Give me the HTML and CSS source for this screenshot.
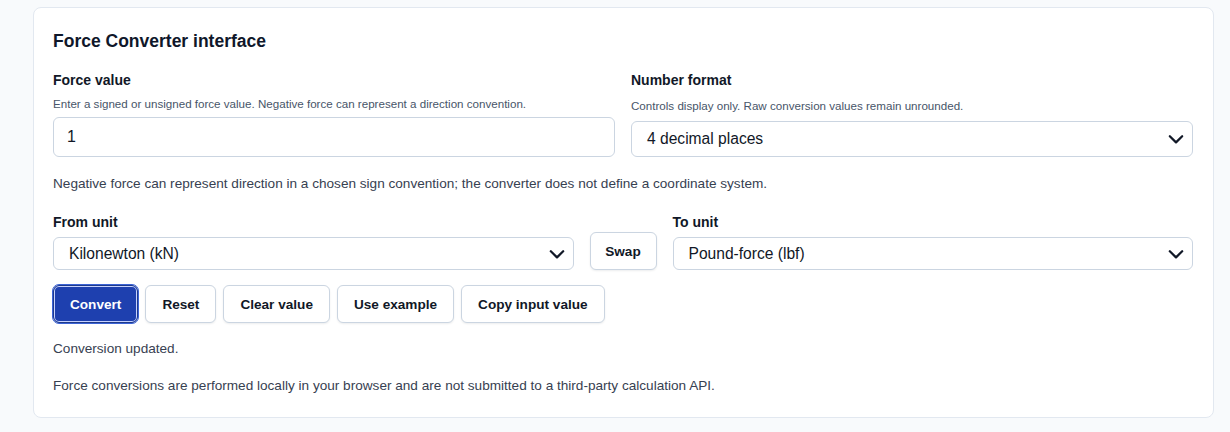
FILE: index.html
```html
<!DOCTYPE html>
<html lang="en">
<head>
<meta charset="utf-8">
<title>Force Converter</title>
<link rel="stylesheet" href="styles.css">
</head>
<body>
<section class="card">
  <h2 class="title">Force Converter interface</h2>
  <div class="top-grid">
    <div class="field">
      <label class="label" for="val">Force value</label>
      <p class="hint">Enter a signed or unsigned force value. Negative force can represent a direction convention.</p>
      <input id="val" class="input" type="text" value="1">
    </div>
    <div class="field">
      <label class="label" for="fmt">Number format</label>
      <p class="hint">Controls display only. Raw conversion values remain unrounded.</p>
      <div class="select select-lg" id="fmt"><span>4 decimal places</span><svg class="chev" viewBox="0 0 16 16"><path d="M2.5 5.5 8 11l5.5-5.5" fill="none" stroke="#111827" stroke-width="2" stroke-linecap="round" stroke-linejoin="round"/></svg></div>
    </div>
  </div>
  <p class="note">Negative force can represent direction in a chosen sign convention; the converter does not define a coordinate system.</p>
  <div class="unit-grid">
    <div class="field">
      <span class="label">From unit</span>
      <div class="select"><span>Kilonewton (kN)</span><svg class="chev" viewBox="0 0 16 16"><path d="M2.5 5.5 8 11l5.5-5.5" fill="none" stroke="#111827" stroke-width="2" stroke-linecap="round" stroke-linejoin="round"/></svg></div>
    </div>
    <button class="btn swap" type="button">Swap</button>
    <div class="field">
      <span class="label">To unit</span>
      <div class="select"><span>Pound-force (lbf)</span><svg class="chev" viewBox="0 0 16 16"><path d="M2.5 5.5 8 11l5.5-5.5" fill="none" stroke="#111827" stroke-width="2" stroke-linecap="round" stroke-linejoin="round"/></svg></div>
    </div>
  </div>
  <div class="actions">
    <button class="btn primary" type="button">Convert</button>
    <button class="btn" type="button">Reset</button>
    <button class="btn" type="button">Clear value</button>
    <button class="btn" type="button">Use example</button>
    <button class="btn" type="button">Copy input value</button>
  </div>
  <p class="status">Conversion updated.</p>
  <p class="privacy">Force conversions are performed locally in your browser and are not submitted to a third-party calculation API.</p>
</section>
</body>
</html>
```

FILE: styles.css
```css
* { box-sizing: border-box; }

html, body {
  margin: 0;
  background: #f8fafc;
}

body {
  padding: 7px 16px 0 33px;
  font-family: "Liberation Sans", Arial, sans-serif;
  color: #111827;
}

.card {
  background: #ffffff;
  border: 1px solid #e2e8f0;
  border-radius: 8px;
  padding: 21px 20px 22px 19px;
  height: 411px;
}

.title {
  margin: 0 0 18px;
  font-size: 17.5px;
  line-height: 24px;
  font-weight: 700;
  color: #0f172a;
}

.top-grid {
  display: grid;
  grid-template-columns: 1fr 1fr;
  gap: 16px;
}

.field {
  display: flex;
  flex-direction: column;
}

.label {
  font-size: 14px;
  font-weight: 700;
  line-height: 18px;
  color: #111827;
}

.hint {
  margin: 7px 0 5px;
  font-size: 11.6px;
  line-height: 16px;
  color: #475569;
}

.top-grid .field:last-child .hint {
  margin: 9px 0 7px;
}

.input {
  height: 40px;
  border: 1px solid #cbd5e1;
  border-radius: 6px;
  padding: 0 13px;
  font-family: inherit;
  font-size: 16px;
  color: #111827;
  background: #ffffff;
}

.select {
  display: flex;
  align-items: center;
  justify-content: space-between;
  height: 33px;
  border: 1px solid #cbd5e1;
  border-radius: 6px;
  padding: 0 7px 0 15px;
  font-size: 15.6px;
  color: #111827;
  background: #ffffff;
}

.select-lg {
  height: 36px;
}

.chev {
  width: 18px;
  height: 18px;
}

.note {
  margin: 18px 0 0;
  font-size: 13.6px;
  line-height: 18px;
  color: #374151;
}

.unit-grid {
  display: grid;
  grid-template-columns: 1fr auto 1fr;
  gap: 16px;
  align-items: end;
  margin-top: 20px;
}

.unit-grid .label {
  margin-bottom: 6px;
}

.btn {
  height: 38px;
  padding: 0 16px;
  border: 1px solid #cbd5e1;
  border-radius: 6px;
  background: #ffffff;
  box-shadow: 0 1px 2px rgba(15, 23, 42, 0.08);
  font-family: inherit;
  font-size: 13.6px;
  font-weight: 700;
  color: #111827;
}

.swap {
  width: 67px;
  padding: 0;
}

.actions {
  display: flex;
  gap: 7px;
  margin-top: 15px;
}

.btn.primary {
  background: #1e40af;
  border-color: #1e3a8a;
  color: #ffffff;
  outline: 1px solid #3b63d6;
  outline-offset: 0;
  box-shadow: inset 0 0 0 1px #c7d2fe;
}

.status {
  margin: 17px 0 0;
  font-size: 13.6px;
  line-height: 18px;
  color: #374151;
}

.privacy {
  margin: 19px 0 0;
  font-size: 13.6px;
  line-height: 18px;
  color: #374151;
}
```
